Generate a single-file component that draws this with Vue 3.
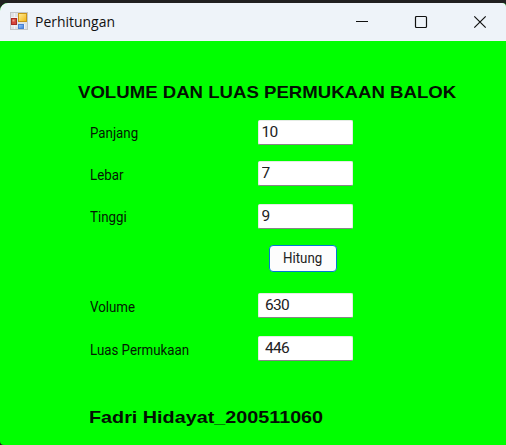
<script setup>
import { ref } from 'vue'

const panjang = ref('10')
const lebar = ref('7')
const tinggi = ref('9')
const volume = ref('630')
const luas = ref('446')

function hitung() {
  const p = Number(panjang.value)
  const l = Number(lebar.value)
  const t = Number(tinggi.value)
  volume.value = String(p * l * t)
  luas.value = String(2 * (p * l + p * t + l * t))
}
</script>

<template>
  <div class="window">
    <header class="titlebar">
      <svg class="app-icon" width="18" height="18" viewBox="0 0 18 18">
        <defs>
          <linearGradient id="gold" x1="0" y1="0" x2="1" y2="1">
            <stop offset="0" stop-color="#ffed9a" />
            <stop offset="1" stop-color="#f3b414" />
          </linearGradient>
          <linearGradient id="blue" x1="0" y1="0" x2="1" y2="1">
            <stop offset="0" stop-color="#9cc8fa" />
            <stop offset="1" stop-color="#3f7fe0" />
          </linearGradient>
        </defs>
        <rect x="0.5" y="0.5" width="17" height="17" fill="#dfe1e4" stroke="#c3c5c8" />
        <path d="M1 5.5H8M4.5 1V5M4.5 13V17M1 14H8M14.5 12V17" stroke="#f2f3f5" fill="none" />
        <rect x="8.5" y="1.5" width="8" height="8" fill="url(#gold)" stroke="#c99318" />
        <rect x="1.5" y="6.5" width="5" height="6" fill="#d6453a" stroke="#a92b26" />
        <rect x="2.5" y="7.5" width="2" height="2" fill="#f09a8c" />
        <rect x="8.5" y="12.5" width="5" height="4" fill="url(#blue)" stroke="#4a82d2" />
      </svg>
      <span class="caption"><span class="fit">Perhitungan</span></span>
      <div class="controls">
        <svg width="14" height="14" viewBox="0 0 14 14"><path d="M1 6.5H13" /></svg>
        <svg width="14" height="14" viewBox="0 0 14 14"><rect x="1.5" y="1.5" width="11" height="11" rx="1" /></svg>
        <svg width="14" height="14" viewBox="0 0 14 14"><path d="M1.3 1.3L12.7 12.7M12.7 1.3L1.3 12.7" /></svg>
      </div>
    </header>
    <main class="form">
      <h1 class="heading">VOLUME DAN LUAS PERMUKAAN BALOK</h1>
      <div class="row panjang">
        <label for="panjang">Panjang</label>
        <input id="panjang" v-model="panjang" />
      </div>
      <div class="row lebar">
        <label for="lebar">Lebar</label>
        <input id="lebar" v-model="lebar" />
      </div>
      <div class="row tinggi">
        <label for="tinggi">Tinggi</label>
        <input id="tinggi" v-model="tinggi" />
      </div>
      <button class="calc" @click="hitung"><span>Hitung</span></button>
      <div class="row volume">
        <label for="volume">Volume</label>
        <input id="volume" v-model="volume" class="result" />
      </div>
      <div class="row luas">
        <label for="luas">Luas Permukaan</label>
        <input id="luas" v-model="luas" class="result" />
      </div>
      <p class="author">Fadri Hidayat_200511060</p>
    </main>
  </div>
</template>

<style>
body {
  background: #202020;
  overflow: hidden;
}
</style>

<style scoped>
.window {
  box-sizing: border-box;
  width: 506px;
  height: 442px;
  margin-top: 3px;
  border-radius: 8px 4px 0 4px;
  overflow: hidden;
  background: #00ff00;
  display: flex;
  flex-direction: column;
}
.titlebar {
  height: 38px;
  flex: none;
  display: flex;
  align-items: center;
  padding-left: 10px;
  background: #eef3f9;
}
.app-icon {
  flex: none;
  margin-bottom: 2px;
}
.caption {
  margin: -2px 0 0 7px;
  font: 15px/20px "Open Sans", "Noto Sans", sans-serif;
  color: #111;
}
.fit {
  display: inline-block;
  transform: scaleX(0.93);
  transform-origin: left;
}
.controls {
  margin-left: auto;
  display: flex;
  gap: 45px;
  padding-right: 19px;
}
.controls svg {
  fill: none;
  stroke: #111;
  stroke-width: 1.2;
}
.form {
  display: flex;
  flex-direction: column;
  align-items: flex-start;
  font-family: "Liberation Sans", Arial, sans-serif;
  color: #041804;
}
.heading {
  margin: 42px 0 0 78px;
  font-size: 17px;
  line-height: 20px;
  font-weight: bold;
  white-space: nowrap;
  color: #031003;
  transform: scaleX(1.094);
  transform-origin: left;
}
.row {
  margin: 17px 0 0 90px;
  display: grid;
  grid-template-columns: 167.5px 95.5px;
  height: 25px;
}
.row label {
  justify-self: start;
  font-family: Roboto, sans-serif;
  font-size: 14px;
  line-height: 28px;
  white-space: nowrap;
  transform: scaleX(0.95);
  transform-origin: left;
}
.row.panjang label,
.row.tinggi label {
  line-height: 26px;
}
.row.lebar {
  margin-top: 16px;
}
.row.tinggi,
.row.luas {
  margin-top: 18px;
}
.row.volume {
  margin-top: 21px;
}
.row input {
  box-sizing: border-box;
  width: 95.5px;
  height: 25px;
  margin: 0;
  padding: 0 3px 1px;
  border: 1px solid #e4ece4;
  border-bottom-color: #868686;
  border-radius: 2px;
  background: #fff;
  color: #222;
  font: 15.5px/22px Roboto, sans-serif;
  letter-spacing: -0.7px;
  outline: none;
}
.row input.result {
  padding-left: 6.5px;
}
.calc {
  box-sizing: border-box;
  width: 68px;
  height: 27px;
  margin: 16px 0 0 269px;
  padding: 0;
  border: 1px solid #0078d4;
  border-radius: 4px;
  background: #fdfdfd;
  color: #222;
  font: 14px/25px Roboto, sans-serif;
}
.calc span {
  display: inline-block;
  transform: scaleX(0.95);
}
.author {
  margin: 47px 0 0 89px;
  font-size: 17px;
  line-height: 20px;
  font-weight: bold;
  white-space: nowrap;
  color: #031003;
  transform: scaleX(1.163);
  transform-origin: left;
}
</style>
